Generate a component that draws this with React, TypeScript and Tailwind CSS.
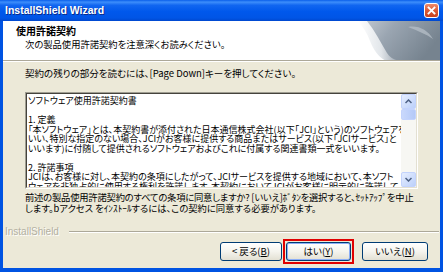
import React from 'react';

const jp = "[font-family:'Noto_Sans_CJK_JP','Noto_Sans',sans-serif] [font-feature-settings:'palt']";

function CloseButton() {
    return (
        <div className="w-[15px] h-[15px] rounded-[3px] border border-white bg-gradient-to-b from-[#EE8A6A] via-[#DB5A36] to-[#C8401C] flex items-center justify-center">
            <svg width="9" height="9" viewBox="0 0 9 9">
                <path d="M1.5 1.5 L7.5 7.5 M7.5 1.5 L1.5 7.5" stroke="#fff" strokeWidth="1.8" strokeLinecap="square" />
            </svg>
        </div>
    );
}

function HeaderArt() {
    return (
        <svg className="absolute right-0 top-0" width="82" height="40" viewBox="0 0 82 40">
            <defs>
                <linearGradient id="sheet" x1="0" y1="0" x2="1" y2="0.4">
                    <stop offset="0" stopColor="#C3CAD2" />
                    <stop offset="0.4" stopColor="#9AA5B1" />
                    <stop offset="1" stopColor="#76838F" />
                </linearGradient>
                <linearGradient id="curl" x1="0" y1="0" x2="1" y2="0">
                    <stop offset="0" stopColor="#FFFFFF" />
                    <stop offset="0.55" stopColor="#E2E6EA" />
                    <stop offset="1" stopColor="#959FAA" />
                </linearGradient>
            </defs>
            <path d="M3 0 H82 V40 H32 C24 30 14 14 3 0 Z" fill="url(#sheet)" />
            <path d="M0 0 H9 C17 10 23 22 29 32 C32 37 37 39 42 40 H28 C21 36 16 30 12 20 C9 12 5 6 0 0 Z" fill="url(#curl)" />
            <path d="M50 6 C60 4 70 9 75 18 C68 13 60 10 50 6 Z" fill="#B9C2CB" opacity="0.7" />
        </svg>
    );
}

function ScrollArrow({ up }: { up: boolean }) {
    return (
        <div className="w-[15px] h-[15px] rounded-[2px] border border-[#C3D3FD] bg-gradient-to-br from-[#E6EEFF] to-[#BCD0FA] flex items-center justify-center">
            <svg width="7" height="5" viewBox="0 0 7 5">
                <path d={up ? 'M0.5 4 L3.5 1 L6.5 4' : 'M0.5 1 L3.5 4 L6.5 1'} stroke="#4D6185" strokeWidth="1.5" fill="none" />
            </svg>
        </div>
    );
}

function XpButton({ label, hot, focused }: { label: string; hot: string; focused?: boolean }) {
    return (
        <div
            className={
                'h-[19px] rounded-[3px] border border-[#003C74] bg-gradient-to-b from-[#FFFFFF] via-[#F5F4EE] to-[#E3E0D3] flex items-center justify-center text-[9.5px] text-black ' +
                jp +
                (focused ? ' shadow-[inset_0_0_0_1px_#8CAEF6]' : '')
            }
        >
            <span>
                {label}(<span className="underline">{hot}</span>)
            </span>
        </div>
    );
}

export default function App() {
    const licenseLines = [
        'ソフトウェア使用許諾契約書',
        '',
        '1. 定義',
        '「本ソフトウェア」とは、本契約書が添付された日本通信株式会社(以下「JCI」という)のソフトウェアを',
        'いい、特別な指定のない場合、JCIがお客様に提供する商品またはサービス(以下「JCIサービス」と',
        'いいます)に付随して提供されるソフトウェアおよびこれに付属する関連書類一式をいいます。',
        '',
        '2. 許諾事項',
        'JCIは、お客様に対し、本契約の条項にしたがって、JCIサービスを提供する地域において、本ソフト',
        'ウェアを非独占的に使用する権利を許諾します。本契約においてJCIがお客様に明示的に許諾して',
    ];

    return (
        <div className="w-[443px] h-[272px] overflow-hidden flex flex-col bg-[#0053E2]">
            {/* title bar */}
            <div className="h-[21px] shrink-0 flex items-center justify-between pl-[5px] pr-[4px] bg-[linear-gradient(to_bottom,#0A5FEA_0%,#3D8EFB_10%,#1166F0_25%,#0058EC_55%,#0055E6_85%,#0048CF_100%)]">
                <span className="text-white font-bold text-[10.5px] [font-family:'Liberation_Sans',sans-serif] [text-shadow:1px_1px_0_#0A2C8A]">
                    InstallShield Wizard
                </span>
                <CloseButton />
            </div>

            <div className="flex-1 mx-[3px] mb-[4px] bg-[#ECE9D8] flex flex-col">
                {/* header */}
                <div className="relative h-[40px] shrink-0 bg-white border-b border-[#ACA899] overflow-hidden">
                    <div className={'pl-[13px] pt-[4px] text-[10px] font-bold leading-[12px] text-black ' + jp}>使用許諾契約</div>
                    <div className={'pl-[22px] pt-[1px] text-[9.3px] leading-[12px] text-black ' + jp}>
                        次の製品使用許諾契約を注意深くお読みください。
                    </div>
                    <HeaderArt />
                </div>
                <div className="h-px bg-white shrink-0" />

                {/* body */}
                <div className="px-[22px] pt-[5px]">
                    <div className={'text-[9.5px] leading-[12px] text-black ' + jp}>
                        契約の残りの部分を読むには、[Page Down]キーを押してください。
                    </div>

                    <div className="mt-[13px] w-[393px] h-[97px] border border-t-[#A09E92] border-l-[#A09E92] border-b-white border-r-white">
                        <div className="h-full border border-t-[#45433C] border-l-[#45433C] border-b-[#E3E0D2] border-r-[#E3E0D2] bg-white flex">
                            <div className={'flex-1 pl-[1px] pt-[2px] overflow-hidden text-[9px] leading-[9.5px] text-black whitespace-nowrap ' + jp}>
                                {licenseLines.map((line, i) => (
                                    <div key={i} className="h-[9.5px]">
                                        {line}
                                    </div>
                                ))}
                            </div>
                            <div className="w-[15px] shrink-0 flex flex-col bg-[#F7F7F3]">
                                <ScrollArrow up />
                                <div className="h-[11px] rounded-[2px] border border-[#C3D3FD] bg-gradient-to-r from-[#C9D8FC] to-[#B4C9F8]" />
                                <div className="flex-1" />
                                <ScrollArrow up={false} />
                            </div>
                        </div>
                    </div>

                    <div className={'mt-[3px] text-[9.3px] leading-[11px] text-black whitespace-nowrap ' + jp}>
                        <div className="tracking-[-0.2px]">前述の製品使用許諾契約のすべての条項に同意しますか? [いいえ]ﾎﾞﾀﾝを選択すると、ｾｯﾄｱｯﾌﾟを中止</div>
                        <div>します。bアクセス をｲﾝｽﾄｰﾙするには、この契約に同意する必要があります。</div>
                    </div>
                </div>

                {/* footer */}
                <div className="mt-[12px] flex items-center pl-[2px] pr-[1px]">
                    <span className="text-[10px] leading-[12px] text-[#B3B0A2] [font-family:'Liberation_Sans',sans-serif] [text-shadow:1px_1px_0_#FFFFFF]">
                        InstallShield
                    </span>
                    <div className="flex-1 ml-[10px] h-[2px] border-t border-[#ACA899] border-b border-b-white" />
                </div>

                <div className="mt-[1px] flex items-center pl-[217px]">
                    <div className="w-[62px]">
                        <XpButton label="< 戻る" hot="B" />
                    </div>
                    <div className="ml-[1px] w-[71px] h-[25px] border-[2px] border-[#E00000] pt-[1px] px-[1px]">
                        <XpButton label="はい" hot="Y" focused />
                    </div>
                    <div className="ml-[8px] w-[66px]">
                        <XpButton label="いいえ" hot="N" />
                    </div>
                </div>
            </div>
        </div>
    );
}
